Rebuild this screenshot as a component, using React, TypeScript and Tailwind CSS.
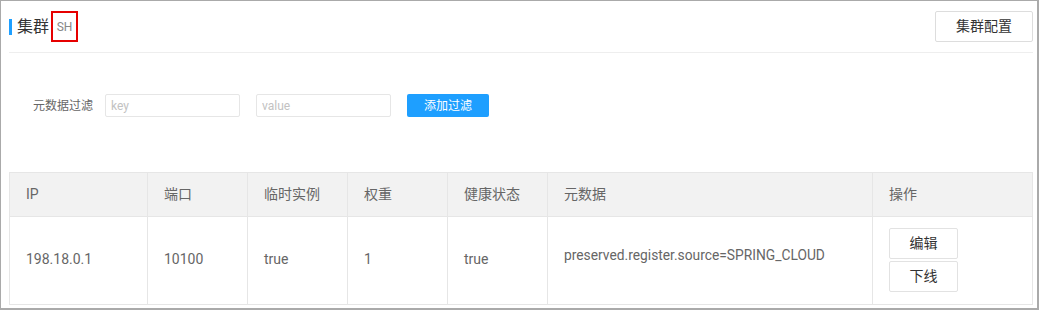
import React from 'react';

const columns = [
  { title: 'IP', width: 138 },
  { title: '端口', width: 100 },
  { title: '临时实例', width: 100 },
  { title: '权重', width: 100 },
  { title: '健康状态', width: 100 },
  { title: '元数据', width: 325 },
  { title: '操作', width: 160 },
];

const rows = [
  {
    ip: '198.18.0.1',
    port: '10100',
    ephemeral: 'true',
    weight: '1',
    healthy: 'true',
    metadata: 'preserved.register.source=SPRING_CLOUD',
  },
];

const App = () => {
  return (
    <div
      className="h-[310px] w-[1039px] overflow-hidden border-t border-l border-r-2 border-b-2 border-[#aaaaaa] bg-white pl-2 pr-[4px] text-[#333]"
      style={{ fontFamily: 'Roboto, "Noto Sans CJK SC", sans-serif' }}
    >
      {/* header */}
      <div className="flex h-[52px] items-center justify-between border-b border-[#eeeeee]">
        <div className="flex items-center">
          <span className="h-[16px] w-[3px] bg-[#1e9fff]" />
          <span className="ml-[5px] text-[16px] leading-none text-[#333]">集群</span>
          <span className="ml-[2px] flex h-[31px] w-[27px] items-center justify-center border-2 border-[#e60000] text-[12px] text-[#888]">
            SH
          </span>
        </div>
        <button className="h-[31px] w-[98px] rounded-[2px] border border-[#dddddd] bg-white text-[14px] text-[#333]">
          集群配置
        </button>
      </div>

      {/* filter */}
      <div className="mt-[41px] flex items-center text-[12px]">
        <span className="ml-[24px] text-[#666]">元数据过滤</span>
        <input
          placeholder="key"
          className="ml-[12px] h-[23px] w-[135px] rounded-[2px] border border-[#e6e6e6] px-[5px] text-[12px] outline-none placeholder:text-[#c2c2c2]"
        />
        <input
          placeholder="value"
          className="ml-[16px] h-[23px] w-[135px] rounded-[2px] border border-[#e6e6e6] px-[5px] text-[12px] outline-none placeholder:text-[#c2c2c2]"
        />
        <button className="ml-[16px] h-[23px] w-[82px] rounded-[2px] bg-[#1e9fff] text-[12px] text-white">
          添加过滤
        </button>
      </div>

      {/* table */}
      <table className="mt-[55px] w-[1023px] table-fixed border-collapse text-[14px] text-[#666]">
        <colgroup>
          {columns.map((c) => (
            <col key={c.title} style={{ width: c.width }} />
          ))}
        </colgroup>
        <thead>
          <tr className="h-[44px] bg-[#f2f2f2]">
            {columns.map((c) => (
              <th key={c.title} className="border border-[#e6e6e6] px-4 text-left font-normal">
                {c.title}
              </th>
            ))}
          </tr>
        </thead>
        <tbody>
          {rows.map((r) => (
            <tr key={r.ip} className="h-[88px]">
              <td className="border border-[#e6e6e6] px-4 pb-[2px]">{r.ip}</td>
              <td className="border border-[#e6e6e6] px-4 pb-[2px]">{r.port}</td>
              <td className="border border-[#e6e6e6] px-4 pb-[2px]">{r.ephemeral}</td>
              <td className="border border-[#e6e6e6] px-4 pb-[2px]">{r.weight}</td>
              <td className="border border-[#e6e6e6] px-4 pb-[2px]">{r.healthy}</td>
              <td className="border border-[#e6e6e6] px-4 pb-[10px] text-[13.8px]">{r.metadata}</td>
              <td className="border border-[#e6e6e6] px-4 pb-[2px]">
                <div className="flex flex-col gap-[2px]">
                  <button className="h-[31px] w-[69px] rounded-[2px] border border-[#e2e2e2] bg-white text-[14px] text-[#333]">
                    编辑
                  </button>
                  <button className="h-[31px] w-[69px] rounded-[2px] border border-[#e2e2e2] bg-white text-[14px] text-[#333]">
                    下线
                  </button>
                </div>
              </td>
            </tr>
          ))}
        </tbody>
      </table>
    </div>
  );
};

export default App;
